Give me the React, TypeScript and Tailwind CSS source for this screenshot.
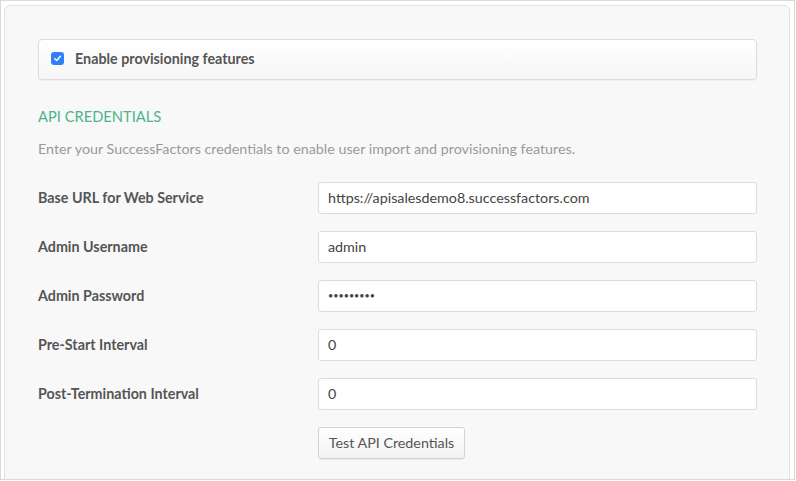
import React from "react";

const rows: { label: string; value: string; pw?: boolean }[] = [
  { label: "Base URL for Web Service", value: "https://apisalesdemo8.successfactors.com" },
  { label: "Admin Username", value: "admin" },
  { label: "Admin Password", value: "•••••••••", pw: true },
  { label: "Pre-Start Interval", value: "0" },
  { label: "Post-Termination Interval", value: "0" },
];

export default function App() {
  return (
    <div className="w-[796px] h-[481px] bg-white" style={{ fontFamily: "Lato, 'Open Sans', sans-serif" }}>
      <div className="w-[795px] h-[480px] border border-[#d9d9d9] overflow-hidden pl-[3px] pt-[4px] bg-white">
        <div className="w-[786px] h-[520px] border border-[#e2e2e2] rounded-[6px] bg-[#f8f8f8] pl-[33px] pr-[32px] pt-[33px]">
          <div className="h-[41px] rounded-[4px] border border-[#dcdcdc] bg-gradient-to-b from-white to-[#f6f6f6] shadow-[0_1px_1px_rgba(0,0,0,0.04)] flex items-center pl-[12px]">
            <span className="w-[13px] h-[13px] rounded-[3px] bg-[#2f7ff7] flex items-center justify-center -mt-[2px]">
              <svg width="9" height="9" viewBox="0 0 10 10">
                <path d="M2 5.2 L4.2 7.3 L8.2 2.6" fill="none" stroke="white" strokeWidth="1.6" strokeLinecap="round" strokeLinejoin="round" />
              </svg>
            </span>
            <span className="ml-[11px] text-[14.3px] leading-[18px] -mt-[2px] font-bold text-[#555]">Enable provisioning features</span>
          </div>
          <div className="mt-[26px] h-[20px] leading-[20px] text-[14.7px] text-[#4db38b] uppercase">API Credentials</div>
          <div className="mt-[13px] h-[20px] leading-[20px] text-[14.3px] text-[#9a9a9a]">
            Enter your SuccessFactors credentials to enable user import and provisioning features.
          </div>
          <div className="mt-[23px] flex flex-col gap-[17px]">
            {rows.map((r) => (
              <div key={r.label} className="flex items-center h-[32px]">
                <div className="w-[280px] text-[14.3px] leading-[18px] -mt-[1px] font-bold text-[#555]">{r.label}</div>
                <div className="flex-1 h-[32px] rounded-[3px] border border-[#dcdcdc] bg-white flex items-center pl-[9px] text-[14.3px] text-[#444]">
                  {r.pw ? (
                    <span className="text-[9px] leading-[10px] text-[#444]">{r.value}</span>
                  ) : (
                    r.value
                  )}
                </div>
              </div>
            ))}
            <div className="flex">
              <div className="w-[280px]" />
              <div className="w-[147px] h-[32px] rounded-[3px] border border-[#d2d2d2] bg-gradient-to-b from-white to-[#f3f3f3] shadow-[0_1px_1px_rgba(0,0,0,0.06)] flex items-center justify-center text-[14.3px] text-[#555]">
                Test API Credentials
              </div>
            </div>
          </div>
        </div>
      </div>
    </div>
  );
}
